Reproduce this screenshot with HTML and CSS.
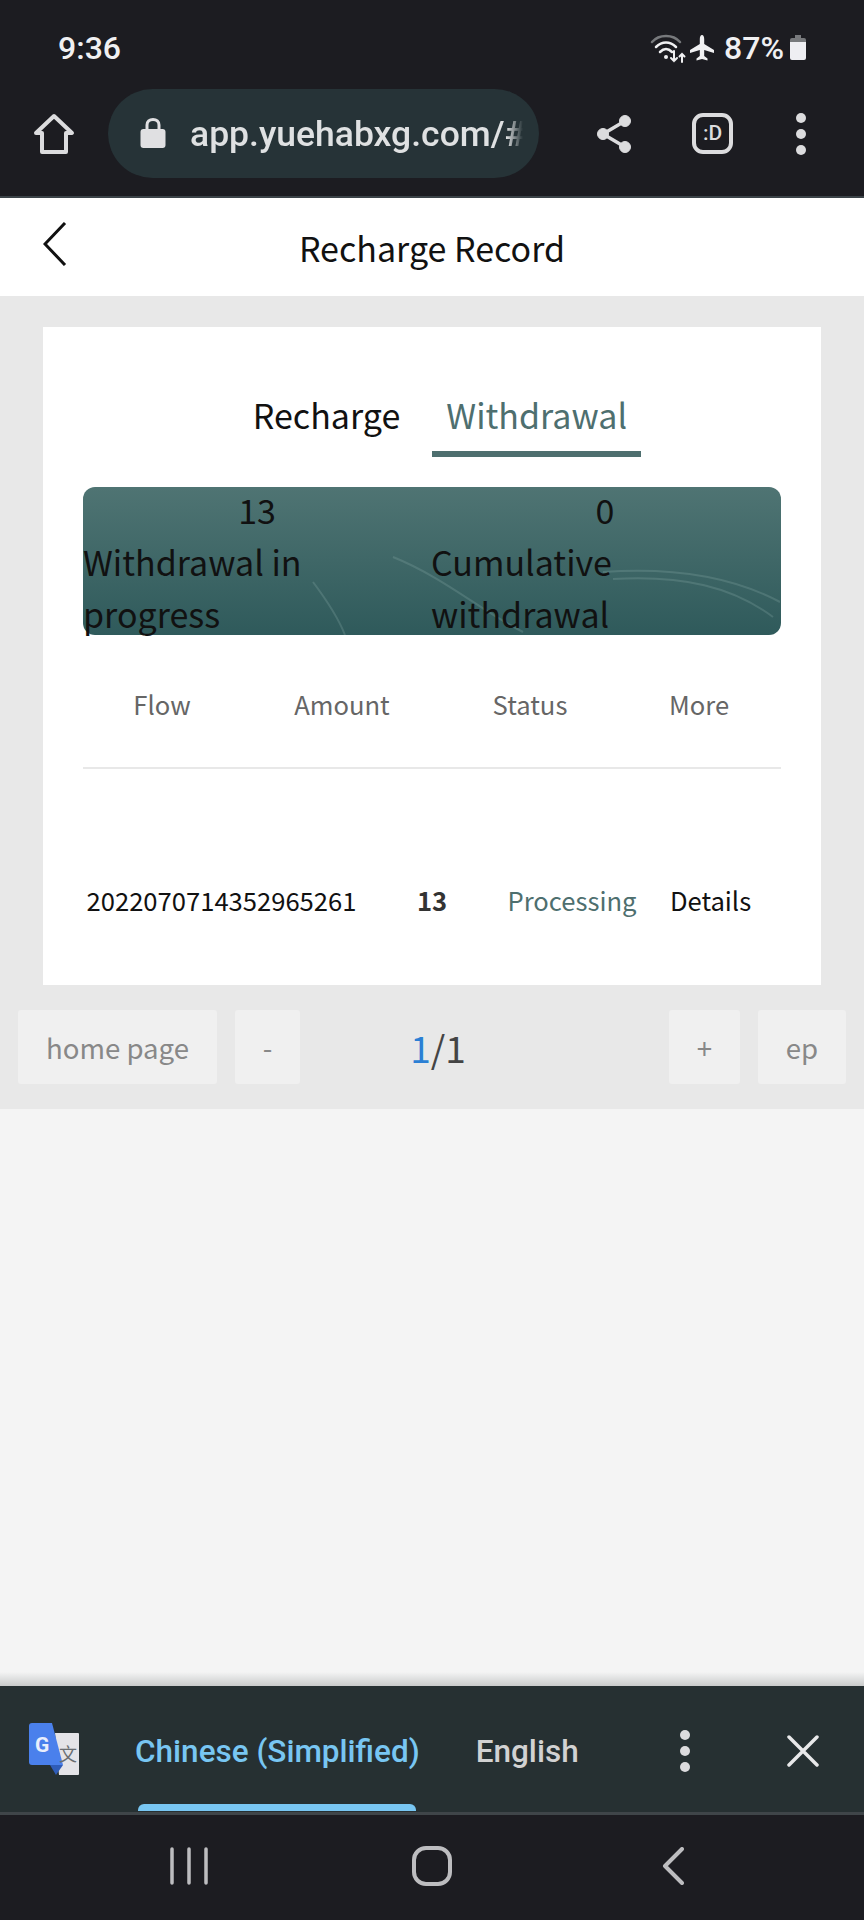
FILE: index.html
```html
<!DOCTYPE html>
<html>
	<head>
		<meta charset="utf-8">
		<title>Recharge Record</title>
		<link rel="stylesheet" href="styles.css">
	</head>
	<body>
		<div class="chrome">
			<div class="status">
				<span class="time">9:36</span>
				<div class="status-right">
					<svg class="wifi" width="36" height="30" viewBox="0 0 36 30" fill="none" stroke-linecap="round">
						<path d="M2 9C9 1 23 1 30 9" stroke="#77797c" stroke-width="2.5"/>
						<path d="M6 14C12 8 20 8 26 14" stroke="#f0f0f2" stroke-width="2.5"/>
						<path d="M10 19C14 15 18 15 22 19" stroke="#f0f0f2" stroke-width="2.5"/>
						<circle cx="16" cy="24" r="2" fill="#f0f0f2"/>
						<path d="M24 18V28M21 25L24 28L27 25M32 29V21M29.500 23.500L32 21L34.500 23.500" stroke="#f0f0f2" stroke-width="2"/>
					</svg>
					<svg class="plane" width="26" height="28" viewBox="0 0 26 28" fill="#f0f0f2">
						<path d="M13 1C14.500 1 15.200 3 15.200 5V10L25 16V19L15.200 16V22L18.500 24.500V26.500L13 25L7.500 26.500V24.500L10.800 22V16L1 19V16L10.800 10V5C10.800 3 11.500 1 13 1Z"/>
					</svg>
					<span class="pct">87%</span>
					<svg class="battery" width="18" height="26" viewBox="0 0 18 26">
						<path d="M6 0H12V3H6Z" fill="#77797c"/>
						<path d="M3 3H15Q17 3 17 5V7H1V5Q1 3 3 3Z" fill="#77797c"/>
						<path d="M1 7H17V23Q17 25 15 25H3Q1 25 1 23Z" fill="#eeeef2"/>
					</svg>
				</div>
			</div>
			<div class="toolbar">
				<svg class="home-icon" width="42" height="42" viewBox="0 0 42 42" fill="none" stroke="#dcdcde" stroke-width="4" stroke-linejoin="round">
					<path d="M21 3L39 20H33V39H9V20H3Z"/>
				</svg>
				<div class="urlbar">
					<svg class="lock" width="26" height="32" viewBox="0 0 26 32">
						<path d="M7 13V8C7 4.500 9.500 2.500 13 2.500S19 4.500 19 8V13" fill="none" stroke="#e0e0e2" stroke-width="3"/>
						<rect x="0.500" y="12" width="25" height="19" rx="3" fill="#e0e0e2"/>
					</svg>
					<span class="url">app.yuehabxg.com/#</span>
				</div>
				<svg class="share" width="36" height="38" viewBox="0 0 36 38" fill="#dcdcde" stroke="#dcdcde">
					<path d="M29 6L7 19L29 32" fill="none" stroke-width="3.500"/>
					<circle cx="29" cy="6" r="5.500"/>
					<circle cx="7" cy="19" r="5.500"/>
					<circle cx="29" cy="32" r="5.500"/>
				</svg>
				<div class="tabcount">:D</div>
				<div class="dots"><i></i><i></i><i></i></div>
			</div>
		</div>

		<div class="navbar">
			<svg class="back" width="24" height="44" viewBox="0 0 24 44" fill="none" stroke="#111" stroke-width="3">
				<path d="M22 1L2 22L22 43"/>
			</svg>
			<span class="navbar-title">Recharge Record</span>
		</div>

		<div class="content">
			<div class="card">
				<div class="tabs">
					<div class="tab">Recharge</div>
					<div class="tab on">Withdrawal</div>
				</div>
				<div class="banner">
					<svg class="banner-lines" width="697" height="148" viewBox="0 0 697 148" fill="none" stroke="#8fb0ad" stroke-width="2" opacity="0.25">
						<path d="M310 70C360 90 400 125 440 145"/>
						<path d="M520 85C590 80 650 90 697 115"/>
						<path d="M230 95C245 115 255 130 262 148"/>
						<path d="M530 92C600 88 650 100 690 130"/>
					</svg>
					<div class="banner-col">
						<div class="banner-num">13</div>
						<div class="banner-label">Withdrawal in progress</div>
					</div>
					<div class="banner-col">
						<div class="banner-num">0</div>
						<div class="banner-label">Cumulative withdrawal</div>
					</div>
				</div>
				<div class="thead">
					<span>Flow</span>
					<span>Amount</span>
					<span>Status</span>
					<span>More</span>
				</div>
				<div class="trow">
					<span>2022070714352965261</span>
					<span class="amount">13</span>
					<span class="state">Processing</span>
					<span>Details</span>
				</div>
			</div>
			<div class="pager">
				<div class="page-btn first">home page</div>
				<div class="page-btn minus">-</div>
				<div class="page-num"><em>1</em>/1</div>
				<div class="page-btn plus">+</div>
				<div class="page-btn last">ep</div>
			</div>
		</div>

		<div class="blank"></div>

		<div class="translate">
			<svg class="gt-logo" width="52" height="54" viewBox="0 0 52 54">
				<path d="M26 10H49Q50 10 50 11V51Q50 52 49 52H30Z" fill="#e4e4e8"/>
				<path d="M3 0H23L34 42H3Q0 42 0 39V3Q0 0 3 0Z" fill="#4a80ec"/>
				<path d="M21 42H34L27 52Z" fill="#2f5cb8"/>
				<text class="gt-g" x="6" y="29">G</text>
				<text class="gt-wen" x="30" y="38">文</text>
			</svg>
			<div class="lang on">Chinese (Simplified)</div>
			<div class="lang">English</div>
			<div class="dots small"><i></i><i></i><i></i></div>
			<svg class="close" width="32" height="32" viewBox="0 0 32 32" stroke="#e8e8ea" stroke-width="3.500" stroke-linecap="round">
				<path d="M2 2L30 30M30 2L2 30"/>
			</svg>
		</div>

		<div class="sysnav">
			<svg width="38" height="38" viewBox="0 0 38 38" stroke="#bdbdc0" stroke-width="3.500" stroke-linecap="round">
				<path d="M2 2V36M19 2V36M36 2V36"/>
			</svg>
			<svg class="sys-home" width="40" height="40" viewBox="0 0 40 40" fill="none" stroke="#bdbdc0" stroke-width="4">
				<rect x="2" y="2" width="36" height="36" rx="12"/>
			</svg>
			<svg class="sys-back" width="22" height="38" viewBox="0 0 22 38" fill="none" stroke="#bdbdc0" stroke-width="4" stroke-linecap="round" stroke-linejoin="round">
				<path d="M20 2L3 19L20 36"/>
			</svg>
		</div>
	</body>
</html>
```

FILE: styles.css
```css
* { margin: 0; padding: 0; box-sizing: border-box; }
html, body { height: 100%; }
body { width: 864px; height: 1920px; display: flex; flex-direction: column; background: #f4f4f4; font-family: "Noto Sans CJK SC", "Noto Sans", sans-serif; overflow: hidden; }

.chrome { height: 198px; background: #1c1c21; border-bottom: 2px solid #3b4348; flex: none; }
.status { height: 89px; padding: 24px 57px 0 58px; display: flex; justify-content: space-between; align-items: flex-start; font-family: Roboto, sans-serif; font-size: 32px; color: #f0f0f2; line-height: 48px; font-weight: 500; }
.status-right { display: flex; align-items: center; height: 48px; }
.wifi { margin-right: 3px; }
.plane { margin-right: 9px; }
.pct { margin-right: 5px; }

.toolbar { height: 89px; display: flex; align-items: center; position: relative; }
.home-icon { margin-left: 33px; flex: none; }
.urlbar { width: 431px; height: 89px; margin-left: 33px; padding-left: 32px; border-radius: 45px; background: #263337; display: flex; align-items: center; overflow: hidden; flex: none; }
.lock { flex: none; margin-top: -2px; }
.url { width: 333px; margin-left: 24px; overflow: hidden; white-space: nowrap; font-family: Roboto, sans-serif; font-size: 35.5px; font-weight: 500; color: #dfe1e2; -webkit-mask-image: linear-gradient(90deg, #000 95%, transparent); mask-image: linear-gradient(90deg, #000 95%, transparent); }
.share { margin-left: 57px; flex: none; }
.tabcount { width: 41px; height: 41px; margin-left: 60px; border: 4px solid #dcdcde; border-radius: 11px; color: #dcdcde; font: 500 21px/33px Roboto, sans-serif; text-align: center; flex: none; }
.dots { display: flex; flex-direction: column; gap: 6px; margin-left: 63px; }
.dots i { display: block; width: 10px; height: 10px; border-radius: 50%; background: #dcdcde; }

.navbar { height: 98px; background: #fff; display: flex; align-items: center; position: relative; flex: none; justify-content: center; }
.back { position: absolute; left: 43px; top: 24px; }
.navbar-title { font-size: 34px; color: #111; }

.content { height: 813px; background: #e8e8e8; padding-top: 31px; flex: none; }
.card { width: 778px; height: 658px; margin-left: 43px; background: #fff; padding: 0 40px; }

.tabs { display: flex; justify-content: center; gap: 18px; padding: 55px 0 0 16px; }
.tab { height: 75px; padding: 0 14px; font-size: 34px; line-height: 65px; color: #111; }
.tab.on { color: #4e6f6f; border-bottom: 6px solid #4e6f6f; }

.banner { height: 148px; margin-top: 30px; border-radius: 12px; background: linear-gradient(#4f7473, #2f5a5b); display: flex; position: relative; color: #111; font-size: 34px; line-height: 52px; }
.banner-lines { position: absolute; left: 0; top: 0; }
.banner-col { width: 348px; margin-top: -3px; position: relative; }
.banner-num { text-align: center; }
.banner-label { width: 240px; }

.thead { height: 134px; padding-top: 4px; display: grid; grid-template-columns: 158px 202px 174px 164px; align-items: center; border-bottom: 2px solid #e8e8e8; font-size: 25.6px; color: #666; text-align: center; }
.trow { height: 134px; margin-top: 63px; display: grid; grid-template-columns: 277px 144px 136px 141px; align-items: center; text-align: center; font-size: 25.6px; color: #111; }
.amount { font-weight: 700; color: #333; }
.state { color: #4e6f6f; }

.pager { display: flex; align-items: center; height: 74px; margin-top: 25px; padding-left: 18px; }
.page-btn { height: 74px; background: #f0f0f0; color: #888; font-size: 27.6px; line-height: 75px; text-align: center; border-radius: 3px; flex: none; }
.first { width: 199px; }
.minus { width: 65px; margin-left: 18px; }
.plus { width: 71px; }
.last { width: 88px; margin-left: 18px; }
.page-num { width: 369px; padding-right: 93px; text-align: center; font-size: 37px; color: #444; }
.page-num em { font-style: normal; color: #2b7fd4; }

.blank { flex: 1; background: linear-gradient(#f4f4f4 calc(100% - 14px), #c9cbcb); }

.translate { height: 129px; padding-top: 5px; background: #263032; border-bottom: 3px solid #3f4549; display: flex; align-items: center; position: relative; font-family: Roboto, sans-serif; font-size: 31.500px; font-weight: 500; flex: none; }
.gt-logo { margin-left: 29px; margin-top: -4px; flex: none; }
.gt-g { font: 700 21px Roboto, sans-serif; fill: #e8eefc; }
.gt-wen { font: 400 18px "Noto Sans CJK SC", sans-serif; fill: #6a6e72; }
.lang { color: #d2d2d2; }
.lang.on { margin-left: 54px; margin-right: 56px; color: #78c6f2; position: relative; }
.lang.on::after { content: ""; position: absolute; left: 3px; right: 4px; top: 71px; height: 7px; background: #78c6f2; border-radius: 6px 6px 0 0; }
.dots.small { margin-left: 101px; margin-top: -2px; }
.close { margin-left: 97px; margin-top: -2px; flex: none; }

.sysnav { flex: none; height: 105px; padding: 0 0 3px 170px; background: #1c1c21; display: flex; align-items: center; }
.sys-home { margin-left: 204px; }
.sys-back { margin-left: 210px; }
```
